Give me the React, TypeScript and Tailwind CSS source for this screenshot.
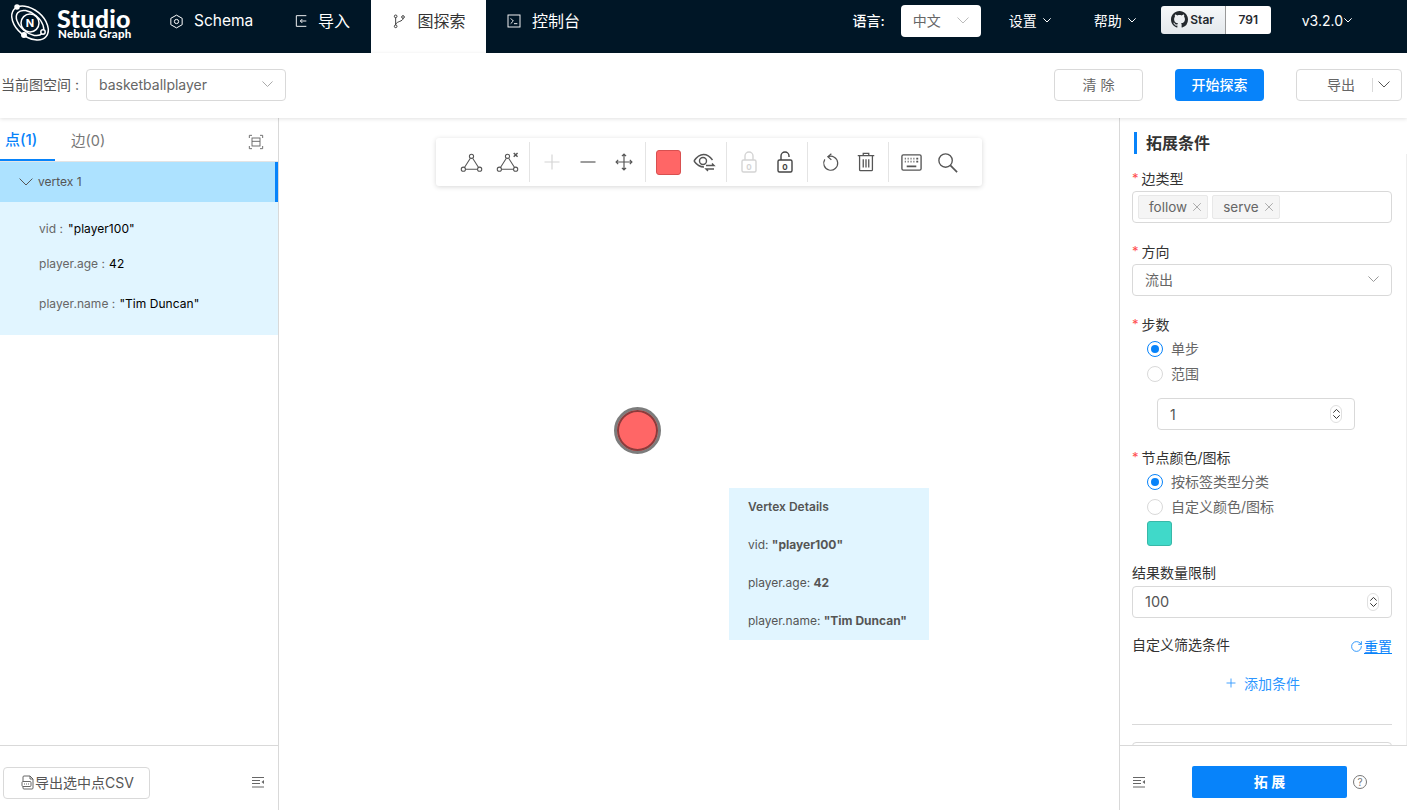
import { X, RotateCw, Plus } from "lucide-react"
import type { ReactNode } from "react"

const font = "font-['Inter','Noto_Sans_CJK_SC',sans-serif]"

// wide, thin chevron as used by the select boxes and menus
function Chevron({ w = 12, strokeWidth = 1, className = "" }: { w?: number; strokeWidth?: number; className?: string }) {
  return (
    <svg width={w} height={w * 0.56} viewBox="0 0 12 6.7" fill="none" stroke="currentColor" className={`shrink-0 ${className}`}>
      <path d="M.5.5 6 6l5.500-5.500" strokeWidth={(strokeWidth * 12) / w} />
    </svg>
  )
}

// stroke icons used in the graph toolbar and the header
function Icon({ size = 20, strokeWidth = 1.4, className = "", children }: { size?: number; strokeWidth?: number; className?: string; children: ReactNode }) {
  return (
    <svg width={size} height={size} viewBox="0 0 24 24" fill="none" stroke="currentColor" strokeWidth={strokeWidth} className={className}>
      {children}
    </svg>
  )
}

function Triangle() {
  return (
    <>
      <circle cx="12" cy="5.500" r="2.200" />
      <circle cx="3.500" cy="19" r="2.200" />
      <circle cx="20.500" cy="19" r="2.200" />
      <path d="M10.800 7.500 4.800 17M13.200 7.500l6 9.500M6 19h12" />
    </>
  )
}

// the logo is one drawing: emblem plus wordmark
function Logo() {
  return (
    <svg width="125" height="42" viewBox="0 0 125 42" fill="none" stroke="#fff" strokeWidth="1.5">
      <ellipse cx="21" cy="21" rx="21" ry="13.500" transform="rotate(40 21 21)" />
      <ellipse cx="21" cy="21" rx="16" ry="9.500" transform="rotate(40 21 21)" />
      <circle cx="21" cy="21" r="9" fill="#001626" />
      <circle cx="8" cy="5" r="2" fill="#fff" />
      <circle cx="34" cy="30" r="2.200" fill="#001626" />
      <circle cx="15" cy="33" r="2.200" fill="#fff" />
      <text x="21" y="25" textAnchor="middle" fontSize="11" fontWeight="700" fill="#fff" stroke="none" fontFamily="Inter">N</text>
      <text x="48" y="26" fontSize="25" fontWeight="900" letterSpacing="0.3" fill="#fff" stroke="none" fontFamily="Lato">Studio</text>
      <text x="49" y="36" fontSize="11.500" fontWeight="900" letterSpacing="0.2" fill="#fff" stroke="none" fontFamily="Lato">Nebula Graph</text>
    </svg>
  )
}

function NavItem({ icon, label, active, className = "" }: { icon: ReactNode; label: string; active?: boolean; className?: string }) {
  return (
    <div className={`flex h-full items-center pb-[11px] ${active ? "bg-white text-[#333]" : "text-white"} ${className}`}>
      {icon}
      <span>{label}</span>
    </div>
  )
}

function Header() {
  return (
    <header className="flex h-[53px] shrink-0 items-center bg-[#001626] text-white">
      <div className="mb-[8px] ml-[9px] flex w-[151px] items-center">
        <Logo />
      </div>
      <NavItem
        className="ml-[8px] w-[125px] gap-[9px] text-[15.5px]"
        label="Schema"
        icon={
          <Icon size={17}>
            <path d="M12 3l8 4.500v9L12 21l-8-4.500v-9z" />
            <circle cx="12" cy="12" r="3" />
          </Icon>
        }
      />
      <NavItem
        className="w-[78px] gap-[9px] text-[16px]"
        label="导入"
        icon={
          <Icon size={16}>
            <path d="M20 4H5v16h15M20 12h-9M14 9l-3 3 3 3" />
          </Icon>
        }
      />
      <NavItem
        active
        className="w-[115px] justify-center gap-[10px] text-[16px]"
        label="图探索"
        icon={
          <Icon size={16}>
            <circle cx="7" cy="5" r="2" />
            <circle cx="7" cy="20" r="2" />
            <circle cx="18" cy="6" r="2" />
            <path d="M7 7v11M18 8c0 5-9 4-11 9" />
          </Icon>
        }
      />
      <NavItem
        className="ml-[20px] gap-[10px] text-[16px]"
        label="控制台"
        icon={
          <Icon size={16}>
            <rect x="3" y="3" width="18" height="18" />
            <path d="M7 8l4 4-4 4M12 16h5" />
          </Icon>
        }
      />
      <div className="mb-[12px] ml-auto flex items-center">
        <span className="text-[14px] font-medium">语言:</span>
        <div className="ml-[16px] flex h-[32px] w-[80px] items-center justify-between rounded-[4px] bg-white pl-[12px] pr-[12px] text-[14px] text-[#666]">
          中文
          <Chevron w={12} className="text-[#bbb]" />
        </div>
        <div className="ml-[28px] flex items-center gap-[6px] text-[14px]">
          设置
          <Chevron w={8} />
        </div>
        <div className="ml-[43px] flex items-center gap-[6px] text-[14px]">
          帮助
          <Chevron w={8} />
        </div>
        <div className="mb-[2px] ml-[25px] flex h-[28px] w-[110px] overflow-hidden rounded-[3px] text-[12px] font-semibold text-[#24292e]">
          <div className="flex w-[65px] items-center justify-center gap-[2px] border-r border-[#999] bg-gradient-to-b from-[#f6f8fa] to-[#e4e8ec]">
            <svg width="17" height="17" viewBox="0 0 16 16" fill="currentColor">
              <path d="M8 0C3.580 0 0 3.580 0 8c0 3.540 2.290 6.530 5.470 7.590.4.070.55-.17.55-.38 0-.19-.01-.82-.01-1.490-2.010.37-2.530-.49-2.690-.94-.09-.23-.48-.94-.82-1.130-.28-.15-.68-.52-.01-.53.63-.01 1.080.58 1.230.82.72 1.210 1.870.87 2.330.66.07-.52.28-.87.51-1.070-1.780-.2-3.640-.89-3.640-3.950 0-.87.31-1.590.82-2.150-.08-.2-.36-1.020.08-2.120 0 0 .67-.21 2.200.82.64-.18 1.320-.27 2-.27s1.360.09 2 .27c1.530-1.040 2.200-.82 2.200-.82.44 1.100.16 1.920.08 2.120.51.56.82 1.270.82 2.150 0 3.070-1.870 3.750-3.650 3.950.29.25.54.73.54 1.480 0 1.070-.01 1.930-.01 2.200 0 .21.15.46.55.38A8.010 8.010 0 0016 8c0-4.420-3.580-8-8-8z" />
            </svg>
            Star
          </div>
          <div className="flex flex-1 items-center justify-center bg-white">791</div>
        </div>
        <div className="ml-[31px] mr-[55px] flex items-center gap-[1px] text-[14px]">
          v3.2.0
          <Chevron w={8} />
        </div>
      </div>
    </header>
  )
}

function SubBar() {
  return (
    <div className="relative z-10 flex h-[65px] shrink-0 items-center bg-white pb-[1px] pl-[1px] text-[14px] text-[#555] shadow-[0_1px_4px_rgba(0,0,0,0.12)]">
      <span className="mb-[1px]">当前图空间 :</span>
      <div className="ml-[7px] flex h-[32px] w-[200px] items-center justify-between rounded-[4px] border border-[#d9d9d9] pb-[1px] pl-[12px] pr-[12px] text-[#666]">
        basketballplayer
        <Chevron w={11} className="text-[#aaa]" />
      </div>
      <div className="ml-auto flex items-center">
        <button className="h-[32px] w-[89px] rounded-[4px] border border-[#d9d9d9] pb-[2px] text-[#666]">清 除</button>
        <button className="ml-[32px] h-[32px] w-[89px] rounded-[4px] bg-[#0783fa] pb-[2px] font-medium text-white">开始探索</button>
        <div className="ml-[32px] mr-[5px] flex h-[32px] w-[106px] items-center rounded-[4px] border border-[#d9d9d9] pb-[1px] text-[#666]">
          <span className="w-[75px] pl-[30px]">导出</span>
          <span className="h-[14px] w-px bg-[#d9d9d9]" />
          <Chevron w={12} className="ml-[5px] text-[#555]" />
        </div>
      </div>
    </div>
  )
}

function LeftPanel() {
  return (
    <aside className="flex w-[279px] shrink-0 flex-col border-r border-[#d9d9d9] bg-white">
      <div className="flex h-[44px] shrink-0 items-end border-b border-[#e4e4e4] text-[14.5px]">
        <div className="flex h-[44px] w-[55px] items-center border-b-[2px] border-[#0783fa] pl-[5px] pt-[4px] text-[15px] font-medium text-[#0783fa]">点(1)</div>
        <div className="ml-[16px] flex h-[44px] items-center pt-[3px] text-[#777]">边(0)</div>
        <Icon size={16} className="mb-[11px] ml-auto mr-[14px] text-[#666]">
          <path d="M2 6V2h4M18 2h4v4M22 18v4h-4M6 22H2v-4" />
          <rect x="6" y="6" width="12" height="12" />
          <path d="M6 11h12" />
        </Icon>
      </div>
      <div className="flex h-[40px] shrink-0 items-center border-r-[3px] border-[#0783fa] bg-[#ade2ff] pl-[19px] text-[12px] text-[#555]">
        <Chevron w={14} />
        <span className="ml-[5px]">vertex 1</span>
      </div>
      <div className="flex h-[133px] shrink-0 flex-col bg-[#e1f5ff] pl-[39px] text-[12px] tracking-[0.05px] text-[#666]">
        <div className="mt-[18px] flex h-[17px] items-center">
          vid :<span className="ml-[5px] text-black">"player100"</span>
        </div>
        <div className="mt-[18px] flex h-[17px] items-center">
          player.age :<span className="ml-[4px] text-black">42</span>
        </div>
        <div className="mt-[23px] flex h-[17px] items-center">
          player.name :<span className="ml-[4px] text-black">"Tim Duncan"</span>
        </div>
      </div>
      <div className="mt-auto flex h-[65px] shrink-0 items-center border-t border-[#d9d9d9] pl-[3px] pr-[13px] pt-[9px]">
        <button className="flex h-[32px] w-[147px] items-center justify-center rounded-[4px] border border-[#d9d9d9] pb-[1px] pl-[2px] text-[14px] text-[#555]">
          <svg width="14" height="15" viewBox="0 0 14 15" fill="none" stroke="currentColor" strokeWidth="0.9">
            <path d="M2 6V2a1 1 0 0 1 1-1h6l3 3v9a1 1 0 0 1-1 1H3a1 1 0 0 1-1-1v-1" />
            <path d="M9 1v3h3" />
            <rect x="1" y="6.500" width="9" height="5" rx="1" />
            <path d="M3 9h5" strokeDasharray="1 1" />
          </svg>
          导出选中点CSV
        </button>
        <CollapseIcon className="ml-auto" />
      </div>
    </aside>
  )
}

function CollapseIcon({ className = "" }: { className?: string }) {
  return (
    <svg width="13" height="13" viewBox="0 0 13 13" fill="none" stroke="#666" className={className}>
      <path d="M0 1.500h12M0 4.500h8M0 7.500h8M0 11h12" />
      <path d="M12 4 9.500 6l2.500 2z" fill="#666" stroke="none" />
    </svg>
  )
}

function ToolButton({ children, className = "w-[36px]" }: { children: ReactNode; className?: string }) {
  return <div className={`flex items-center justify-center ${className}`}>{children}</div>
}

function Divider() {
  return <span className="mx-[4px] h-[40px] w-px bg-[#e4e4e4]" />
}

function Lock({ open }: { open?: boolean }) {
  return (
    <>
      <rect x="5" y="10" width="14" height="12" rx="1.500" />
      <path d={open ? "M8 10V6a4 4 0 0 1 8 0v1" : "M8 10V6a4 4 0 0 1 8 0v4"} />
      <text x="12" y="19.500" textAnchor="middle" fontSize="8" fontWeight="700" fill="currentColor" stroke="none" fontFamily="Inter">0</text>
    </>
  )
}

function Toolbar() {
  return (
    <div className="absolute left-[157px] top-[20px] flex h-[48px] w-[546px] items-center rounded-[3px] bg-white pl-[17px] text-[#555] shadow-[0_1px_5px_rgba(0,0,0,0.16)]">
      <ToolButton>
        <Icon size={23} strokeWidth={1.1}>
          <Triangle />
        </Icon>
      </ToolButton>
      <ToolButton>
        <Icon size={23} strokeWidth={1.1}>
          <Triangle />
          <path d="M18.500 2l4 4M22.500 2l-4 4" strokeWidth="1.500" />
        </Icon>
      </ToolButton>
      <Divider />
      <ToolButton>
        <Icon size={20} className="text-[#d4d4d4]">
          <path d="M12 3v18M3 12h18" />
        </Icon>
      </ToolButton>
      <ToolButton>
        <Icon size={20}>
          <path d="M3 12h18" />
        </Icon>
      </ToolButton>
      <ToolButton className="w-[35px]">
        <Icon size={20}>
          <path d="M12 2v20M2 12h20M9.500 5 12 2.500 14.500 5M9.500 19l2.500 2.500 2.500-2.500M5 9.500 2.500 12 5 14.500M19 9.500l2.500 2.500-2.500 2.500" />
        </Icon>
      </ToolButton>
      <Divider />
      <ToolButton>
        <span className="h-[25px] w-[25px] rounded-[3px] border border-[#d85050] bg-[#ff6666]" />
      </ToolButton>
      <ToolButton>
        <Icon size={24}>
          <path d="M2 11c3-4.500 6-6.500 9.500-6.500S18 6.500 20.500 10" />
          <path d="M2 11c2.500 3.500 5.500 6 10 6" />
          <circle cx="11" cy="11" r="3.500" />
          <path d="M14 15.500h8l-2-2M22 19h-8l2 2" />
        </Icon>
      </ToolButton>
      <Divider />
      <ToolButton>
        <Icon size={24} className="text-[#d4d4d4]">
          <Lock />
        </Icon>
      </ToolButton>
      <ToolButton>
        <Icon size={24} className="text-[#444]">
          <Lock open />
        </Icon>
      </ToolButton>
      <Divider />
      <ToolButton>
        <Icon size={21}>
          <path d="M9 5.500a8 8 0 1 1-3.500 3" />
          <path d="M13 2 9 5.500l4 3.500" />
        </Icon>
      </ToolButton>
      <ToolButton>
        <Icon size={22}>
          <path d="M3 5h18M9 5V2.500h6V5M5 5v15.500a1 1 0 0 0 1 1h12a1 1 0 0 0 1-1V5M9 9v9M12 9v9M15 9v9" />
        </Icon>
      </ToolButton>
      <Divider />
      <ToolButton>
        <Icon size={23}>
          <rect x="2" y="4" width="20" height="16" rx="1.500" />
          <path d="M5 8h1M8 8h1M11 8h1M14 8h1M17 8h2M5 11h1M8 11h1M11 11h1M14 11h1M17 11h2M7 16h10" strokeWidth="1.800" />
        </Icon>
      </ToolButton>
      <ToolButton>
        <Icon size={23}>
          <circle cx="10" cy="10" r="7" />
          <path d="M15 15l7 7" strokeWidth="1.800" />
        </Icon>
      </ToolButton>
    </div>
  )
}

function Canvas() {
  return (
    <main className="relative flex-1 bg-white">
      <Toolbar />
      {/* node and tooltip sit on the free graph canvas */}
      <div className="absolute left-[335px] top-[289px] h-[47px] w-[47px] rounded-full border-[3px] border-[#7c7c7c] bg-[#ff6666] shadow-[inset_0_0_0_2px_#8a3c3c]" />
      <div className="absolute left-[450px] top-[370px] h-[152px] w-[200px] bg-[#e1f5ff] pl-[19px] pt-[10px] text-[12px] leading-[17px] text-[#555]">
        <div className="font-semibold">Vertex Details</div>
        <div className="mt-[21px]">
          vid: <b className="font-bold">"player100"</b>
        </div>
        <div className="mt-[21px]">
          player.age: <b className="font-bold">42</b>
        </div>
        <div className="mt-[21px]">
          player.name: <b className="font-bold">"Tim Duncan"</b>
        </div>
      </div>
    </main>
  )
}

function Label({ children, required, className = "" }: { children: ReactNode; required?: boolean; className?: string }) {
  return (
    <div className={`flex h-[20px] shrink-0 items-center pb-[1px] text-[14px] text-[#333] ${className}`}>
      {required && <span className="mr-[3px] text-[13px] text-[#ff4d4f]">*</span>}
      {children}
    </div>
  )
}

function Radio({ checked, label }: { checked?: boolean; label: string }) {
  return (
    <div className="ml-[15px] flex h-[25px] shrink-0 items-center text-[14px] text-[#666]">
      <span className={`flex h-[16px] w-[16px] items-center justify-center rounded-full border ${checked ? "border-[#0783fa]" : "border-[#d9d9d9]"}`}>
        {checked && <span className="h-[8px] w-[8px] rounded-full bg-[#0783fa]" />}
      </span>
      <span className="ml-[8px]">{label}</span>
    </div>
  )
}

function Stepper() {
  return (
    <span className="flex h-[18px] w-[12px] flex-col items-center justify-center gap-[2px] rounded-[6px] border border-[#e0e0e0] text-[#333]">
      <Chevron w={7} className="rotate-180" />
      <Chevron w={7} />
    </span>
  )
}

function Tag({ label }: { label: string }) {
  return (
    <span className="flex h-[24px] items-center gap-[3px] rounded-[2px] border border-[#e8e8e8] bg-[#f5f5f5] pl-[10px] pr-[3px] text-[13.5px] text-[#666]">
      {label}
      <X size={14} strokeWidth={1} className="text-[#777]" />
    </span>
  )
}

function RightPanel() {
  return (
    <aside className="flex w-[288px] shrink-0 flex-col overflow-hidden border-l border-[#d9d9d9] bg-white">
      <div className="flex h-[36px] shrink-0 items-end pl-[14px]">
        <span className="h-[22px] w-[3px] bg-[#0783fa]" />
        <span className="ml-[9px] text-[16px] font-semibold leading-[22px] text-[#333]">拓展条件</span>
      </div>
      <div className="flex min-h-0 flex-1 flex-col overflow-hidden border-r border-[#eeeeee] pl-[12px] pr-[11px]">
        <div className="flex w-[260px] flex-col">
          <Label required className="mt-[15px]">边类型</Label>
          <div className="mt-[2px] flex h-[32px] shrink-0 items-center gap-[4px] rounded-[4px] border border-[#d9d9d9] pl-[5px]">
            <Tag label="follow" />
            <Tag label="serve" />
          </div>
          <Label required className="mt-[19px]">方向</Label>
          <div className="mt-[2px] flex h-[32px] shrink-0 items-center justify-between rounded-[4px] border border-[#d9d9d9] pb-[1px] pl-[12px] pr-[12px] text-[14px] text-[#666]">
            流出
            <Chevron w={11} className="text-[#999]" />
          </div>
          <Label required className="mt-[19px]">步数</Label>
          <div className="mt-[1px]">
            <Radio checked label="单步" />
            <Radio label="范围" />
          </div>
          <div className="ml-[25px] mt-[12px] flex h-[32px] w-[198px] shrink-0 items-center justify-between rounded-[4px] border border-[#d9d9d9] pl-[12px] pr-[12px] text-[14px] text-[#555]">
            1
            <Stepper />
          </div>
          <Label required className="mt-[18px]">节点颜色/图标</Label>
          <div className="mt-[1px]">
            <Radio checked label="按标签类型分类" />
            <Radio label="自定义颜色/图标" />
          </div>
          <span className="ml-[15px] mt-[2px] h-[25px] w-[25px] shrink-0 rounded-[3px] border border-[#38b8a8] bg-[#40d9c9]" />
          <Label className="mt-[17px]">结果数量限制</Label>
          <div className="mt-[3px] flex h-[32px] shrink-0 items-center justify-between rounded-[4px] border border-[#d9d9d9] pl-[12px] pr-[12px] text-[14.5px] text-[#555]">
            100
            <Stepper />
          </div>
          <div className="mt-[16px] flex h-[20px] shrink-0 items-center justify-between">
            <span className="text-[14px] text-[#333]">自定义筛选条件</span>
            <span className="mt-[4px] flex items-center text-[14px] text-[#0783fa]">
              <RotateCw size={13} strokeWidth={1.5} />
              <span className="ml-[1px] underline">重置</span>
            </span>
          </div>
          <div className="mt-[19px] flex h-[20px] shrink-0 items-center justify-center text-[14px] text-[#2d96ff]">
            <Plus size={14} strokeWidth={1.5} />
            <span className="ml-[6px]">添加条件</span>
          </div>
          <div className="mt-[31px] h-px shrink-0 bg-[#d9d9d9]" />
          <div className="mt-[17px] h-[32px] shrink-0 rounded-[4px] border border-[#d9d9d9]" />
        </div>
      </div>
      <div className="flex h-[65px] shrink-0 items-center border-t border-[#d9d9d9] pl-[13px] pt-[8px]">
        <CollapseIcon />
        <button className="ml-[46px] h-[32px] w-[155px] rounded-[2px] bg-[#0783fa] pb-[2px] text-[14px] font-semibold text-white">拓 展</button>
        <span className="ml-[6px] flex h-[14px] w-[14px] items-center justify-center rounded-full border border-[#777] text-[10px] leading-none text-[#777]">?</span>
      </div>
    </aside>
  )
}

export default function App() {
  return (
    <div className={`flex h-[810px] w-full flex-col overflow-hidden bg-white ${font}`}>
      <Header />
      <SubBar />
      <div className="flex min-h-0 flex-1">
        <LeftPanel />
        <Canvas />
        <RightPanel />
      </div>
    </div>
  )
}
